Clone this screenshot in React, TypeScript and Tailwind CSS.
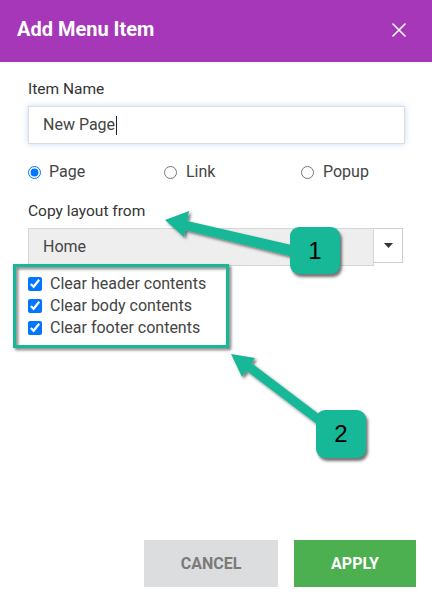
import React from 'react';

const font = { fontFamily: 'Roboto, "Liberation Sans", Arial, sans-serif' };

function Annotations() {
    return (
        <div className="pointer-events-none absolute inset-0">
            <svg className="absolute inset-0" width="432" height="602" viewBox="0 0 432 602">
                <defs>
                    <filter id="sh" x="-20%" y="-20%" width="140%" height="140%">
                        <feDropShadow dx="2" dy="2" stdDeviation="1.5" floodColor="#000" floodOpacity="0.55" />
                    </filter>
                </defs>
                {/* frame round the checkboxes */}
                <rect x="14.5" y="265.5" width="213" height="81" fill="none" stroke="#17b897" strokeWidth="3" filter="url(#sh)" />
                {/* arrow 1 */}
                <g filter="url(#sh)" fill="#17b897">
                    <polygon points="296,246 294,257 181,229 183,220" />
                    <polygon points="165,220 189,211 184,237" />
                </g>
                {/* arrow 2 */}
                <g filter="url(#sh)" fill="#17b897">
                    <polygon points="250,362 244,369 322,428 328,421" />
                    <polygon points="231,354 255,358 242,377" />
                </g>
            </svg>
            <div
                className="absolute left-[290px] top-[227px] flex h-[47px] w-[50px] items-center justify-center rounded-[9px] bg-[#17b897] text-[24px] text-black shadow-[2px_3px_3px_rgba(0,0,0,0.55)]"
                style={{ fontFamily: '"Liberation Sans", Arial, sans-serif' }}>
                1
            </div>
            <div
                className="absolute left-[316px] top-[410px] flex h-[48px] w-[50px] items-center justify-center rounded-[9px] bg-[#17b897] text-[24px] text-black shadow-[2px_3px_3px_rgba(0,0,0,0.55)]"
                style={{ fontFamily: '"Liberation Sans", Arial, sans-serif' }}>
                2
            </div>
        </div>
    );
}

export default function App() {
    const options = ['Clear header contents', 'Clear body contents', 'Clear footer contents'];

    return (
        <div className="relative flex h-[602px] w-[432px] flex-col overflow-hidden bg-white" style={font}>
            {/* header */}
            <div className="flex h-[62px] items-center justify-between bg-[#a637b9] pb-[4px] pl-[17px] pr-[26px]">
                <h1 className="text-[20px] font-bold text-white">Add Menu Item</h1>
                <svg width="14" height="14" viewBox="0 0 14 14" className="mt-[2px]">
                    <path d="M1 1L13 13M13 1L1 13" stroke="#fff" strokeWidth="1.6" strokeLinecap="round" />
                </svg>
            </div>

            {/* body */}
            <div className="flex flex-col px-[28px] pt-[18px] text-[#444]">
                <label className="text-[15.5px] leading-[18px] text-[#333]">Item Name</label>
                <div className="mt-[8px] flex h-[38px] w-[377px] items-center border border-[#dcdcdc] pl-[14px] text-[16px] text-[#444] shadow-[0_0_6px_rgba(90,150,230,0.35)]">
                    New Page
                    <span className="ml-[1px] inline-block h-[19px] w-[1px] bg-[#222]" />
                </div>

                <div className="mt-[18px] flex h-[20px] items-center text-[16px] text-[#444]">
                    <label className="flex w-[136px] items-center gap-[8px]">
                        <input type="radio" name="kind" defaultChecked className="m-0 h-[13px] w-[13px]" />
                        Page
                    </label>
                    <label className="flex w-[137px] items-center gap-[9px]">
                        <input type="radio" name="kind" className="m-0 h-[13px] w-[13px]" />
                        Link
                    </label>
                    <label className="flex items-center gap-[9px]">
                        <input type="radio" name="kind" className="m-0 h-[13px] w-[13px]" />
                        Popup
                    </label>
                </div>

                <label className="mt-[20px] text-[15.5px] leading-[18px] text-[#333]">Copy layout from</label>
                <div className="mt-[8px] flex h-[38px] w-[375px]">
                    <div className="flex w-[346px] items-center border border-[#d6d6d6] bg-[#eeeeee] pl-[14px] text-[16px] text-[#444]">
                        Home
                    </div>
                    <div className="flex h-[35px] w-[29px] items-center justify-center border border-l-0 border-[#cccccc] bg-white">
                        <svg width="9" height="5" viewBox="0 0 9 5">
                            <path d="M0 0H9L4.5 5Z" fill="#333" />
                        </svg>
                    </div>
                </div>

                <div className="mt-[7px] flex flex-col">
                    {options.map((o) => (
                        <label key={o} className="flex h-[22px] items-center gap-[8px] text-[16px] text-[#444]">
                            <input type="checkbox" defaultChecked className="m-0 h-[14px] w-[14px]" />
                            {o}
                        </label>
                    ))}
                </div>
            </div>

            {/* footer */}
            <div className="mt-auto flex justify-end gap-4 pb-[15px] pr-4">
                <button className="h-[47px] w-[134px] bg-[#dcdddf] text-[16px] font-bold text-[#7a7a7a]">CANCEL</button>
                <button className="h-[47px] w-[122px] bg-[#4caf50] text-[16px] font-bold text-white">APPLY</button>
            </div>

            <Annotations />
        </div>
    );
}
